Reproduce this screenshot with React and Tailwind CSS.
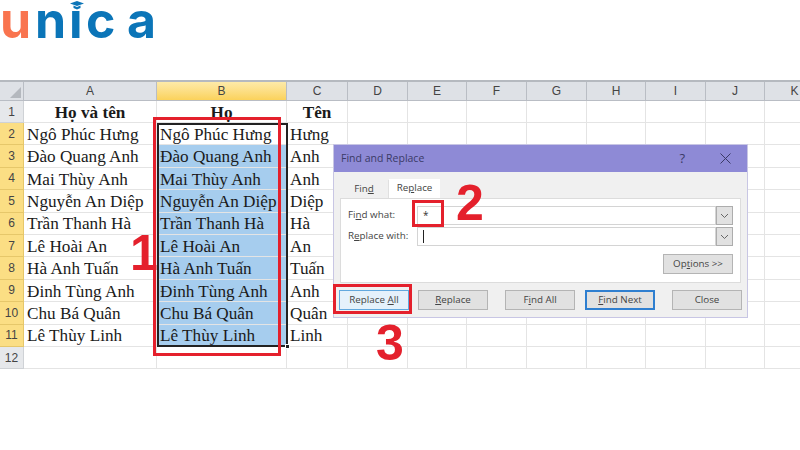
const people = [
  ["Ngô Phúc Hưng", "Ngô Phúc Hưng", "Hưng"],
  ["Đào Quang Anh", "Đào Quang Anh", "Anh"],
  ["Mai Thùy Anh", "Mai Thùy Anh", "Anh"],
  ["Nguyễn An Diệp", "Nguyễn An Diệp", "Diệp"],
  ["Trần Thanh Hà", "Trần Thanh Hà", "Hà"],
  ["Lê Hoài An", "Lê Hoài An", "An"],
  ["Hà Anh Tuấn", "Hà Anh Tuấn", "Tuấn"],
  ["Đinh Tùng Anh", "Đinh Tùng Anh", "Anh"],
  ["Chu Bá Quân", "Chu Bá Quân", "Quân"],
  ["Lê Thùy Linh", "Lê Thùy Linh", "Linh"],
];

const emptyCols = ["D", "E", "F", "G", "H", "I", "J", "K"];

function ColHead({ label, active }) {
  return (
    <div
      className={`flex items-center justify-center border-r border-b border-[#b9bdc4] text-[12px] text-[#444] font-['Liberation_Sans',sans-serif] ${
        active ? "bg-gradient-to-b from-[#fdeaa8] to-[#fbd25a]" : "bg-[#dee1e6]"
      }`}
    >
      {label}
    </div>
  );
}

function RowHead({ n, active }) {
  return (
    <div
      className={`flex items-center justify-center border-r border-b text-[12px] text-[#444] font-['Liberation_Sans',sans-serif] ${
        active ? "bg-[#fbde84] border-[#e6c76a]" : "bg-[#e6e8eb] border-[#cfd2d6]"
      }`}
    >
      {n}
    </div>
  );
}

function Cell({ children, className = "" }) {
  return (
    <div
      className={`flex items-center overflow-visible whitespace-nowrap border-r border-b border-[#e4e4e4] px-[3px] pt-[2px] text-[17.2px] text-[#1a1a1a] font-['Liberation_Serif',serif] ${className}`}
    >
      {children}
    </div>
  );
}

function Sheet() {
  return (
    <div className="grid grid-cols-[24px_133px_130px_61px_60px_59px_60px_60px_59px_60px_59px_60px] grid-rows-[19px_22px_repeat(11,22.4px)] border-t-2 border-[#b5b9bf] w-[825px]">
      <div className="relative bg-[#dee1e6] border-r border-b border-[#b9bdc4]">
        <div className="absolute right-[2px] bottom-[2px] w-0 h-0 border-l-[11px] border-l-transparent border-b-[11px] border-b-[#b4b8be]" />
      </div>
      <ColHead label="A" />
      <ColHead label="B" active />
      <ColHead label="C" />
      {emptyCols.map((c) => (
        <ColHead key={c} label={c} />
      ))}

      <RowHead n={1} />
      <Cell className="justify-center font-bold">Họ và tên</Cell>
      <Cell className="justify-center font-bold">Họ</Cell>
      <Cell className="justify-center font-bold">Tên</Cell>
      {emptyCols.map((c) => (
        <Cell key={c} />
      ))}

      {people.map((p, i) => (
        <div key={i} className="contents">
          <RowHead n={i + 2} active />
          <Cell>{p[0]}</Cell>
          <Cell className={i === 0 ? "" : "bg-[#a6cdee]"}>{p[1]}</Cell>
          <Cell>{p[2]}</Cell>
          {emptyCols.map((c) => (
            <Cell key={c} />
          ))}
        </div>
      ))}

      <RowHead n={12} />
      <Cell />
      <Cell />
      <Cell />
      {emptyCols.map((c) => (
        <Cell key={c} />
      ))}
    </div>
  );
}

const buttonStyles = {
  normal: "border border-[#b4b4b4] bg-[#e1e1e1]",
  hover: "border border-[#62a8de] bg-[#e5f1fb]",
  focused: "border-2 border-[#2f7fd0] bg-[#e1e1e1]",
};

function DlgButton({ children, variant = "normal" }) {
  return (
    <div
      className={`flex items-center justify-center h-[20px] w-[70px] text-[9.8px] text-[#444] ${buttonStyles[variant]}`}
    >
      {children}
    </div>
  );
}

function ComboRow({ label, value, caret }) {
  return (
    <div className="flex items-center h-[19px]">
      <div className="w-[69px] text-[9.8px] text-[#444] whitespace-nowrap">{label}</div>
      <div className="flex-1 flex items-center h-[19px] border border-[#d4d4d4] bg-white pl-[5px] text-[10px] text-[#333]">
        {value}
        {caret && <div className="w-px h-[13px] bg-[#222]" />}
      </div>
      <div className="flex items-center justify-center w-[17px] h-[19px] border border-[#adadad] bg-[#e1e1e1]">
        <svg width="9" height="6" viewBox="0 0 9 6" fill="none" stroke="#666" strokeWidth="1">
          <path d="M1 1l3.500 3.500L8 1" />
        </svg>
      </div>
    </div>
  );
}

function Dialog() {
  return (
    <div className="absolute left-[333px] top-[144px] w-[415px] h-[174px] bg-[#f0f0f0] border border-[#c8c6e4] flex flex-col font-['Open_Sans',sans-serif]">
      <div className="flex items-center justify-between h-[27px] shrink-0 bg-[#8e8ad6] pl-[7px] pr-[16px] text-[10.5px] text-[#3b3a66]">
        <span>Find and Replace</span>
        <div className="flex items-center gap-[35px]">
          <span className="text-[13px]">?</span>
          <svg width="11" height="11" viewBox="0 0 11 11" fill="none" stroke="#3b3a66" strokeWidth="1">
            <path d="M0.500 0.500l10 10M10.500 0.500l-10 10" />
          </svg>
        </div>
      </div>

      <div className="flex pl-[6px] pt-[7px] h-[26px] shrink-0 text-[9.8px] text-[#444]">
        <div className="flex items-center justify-center w-[49px] h-[18px] mt-[1px] border-r border-[#e0e0e0]">
          <span>
            Fin<span className="underline">d</span>
          </span>
        </div>
        <div className="flex items-center justify-center w-[51px] h-[19px] bg-white">
          <span>
            Re<span className="underline">p</span>lace
          </span>
        </div>
      </div>

      <div className="mx-[6px] w-[401px] h-[85px] shrink-0 bg-white border border-[#dcdcdc] pl-[7px] pr-[7px] pt-[7px] flex flex-col">
        <div className="flex flex-col gap-[2px]">
          <ComboRow
            label={
              <span>
                Fi<span className="underline">n</span>d what:
              </span>
            }
            value="*"
          />
          <ComboRow
            label={
              <span>
                R<span className="underline">e</span>place with:
              </span>
            }
            caret
          />
        </div>
        <div className="flex justify-end mt-[8px]">
          <DlgButton>
            <span>
              Op<span className="underline">t</span>ions &gt;&gt;
            </span>
          </DlgButton>
        </div>
      </div>

      <div className="flex items-center justify-between pl-[5px] pr-[5px] pt-[7px]">
        <div className="flex gap-[9px]">
          <DlgButton variant="hover">
            <span>
              Replace <span className="underline">A</span>ll
            </span>
          </DlgButton>
          <DlgButton>
            <span>
              <span className="underline">R</span>eplace
            </span>
          </DlgButton>
        </div>
        <div className="flex gap-[10px]">
          <DlgButton>
            <span>
              F<span className="underline">i</span>nd All
            </span>
          </DlgButton>
          <DlgButton variant="focused">
            <span>
              <span className="underline">F</span>ind Next
            </span>
          </DlgButton>
        </div>
        <DlgButton>Close</DlgButton>
      </div>
    </div>
  );
}

function Logo() {
  return (
    <div className="relative h-[80px] font-['Inter',sans-serif] font-bold text-[50px] leading-[40px] flex items-start">
      <span className="text-[#f9744f] w-[35px]">u</span>
      <span className="text-[#0b75b8] w-[34px]">n</span>
      <span className="text-[#0b75b8] w-[17px]">i</span>
      <span className="text-[#0b75b8] w-[41px]">c</span>
      <span className="text-[#0b75b8]">a</span>
      <svg className="absolute left-[67px] top-0" width="20" height="11" viewBox="0 0 20 11">
        <rect x="0" y="0" width="20" height="11" fill="#fff" />
        <path d="M3 3.500L10 1l7 2.500L10 6z" fill="#0b75b8" />
        <path d="M6.500 5.500v2.500l3.500 1.500 3.500-1.500v-2.500L10 7z" fill="#0b75b8" />
      </svg>
    </div>
  );
}

function App() {
  return (
    <div className="relative w-[800px] h-[450px] overflow-hidden bg-white">
      <Logo />
      <Sheet />

      {/* selection border + fill handle */}
      <div className="absolute left-[157px] top-[123px] w-[131px] h-[224px] border-2 border-[#222]" />
      <div className="absolute left-[285px] top-[344px] w-[5px] h-[5px] bg-[#222] border border-white" />

      <Dialog />

      {/* red annotation boxes */}
      <div className="absolute left-[153px] top-[117px] w-[128px] h-[239px] border-[3px] border-[#e4202c]" />
      <div className="absolute left-[412px] top-[200px] w-[32px] h-[27px] border-[3px] border-[#e4202c]" />
      <div className="absolute left-[333px] top-[284px] w-[79px] h-[30px] border-[3px] border-[#e4202c]" />

      <div className="absolute left-[130px] top-[224px] text-[#e4202c] text-[50px] leading-[58px] font-bold font-['Liberation_Sans',sans-serif]">1</div>
      <div className="absolute left-[456px] top-[174px] text-[#e4202c] text-[50px] leading-[58px] font-bold font-['Liberation_Sans',sans-serif]">2</div>
      <div className="absolute left-[376px] top-[314px] text-[#e4202c] text-[50px] leading-[58px] font-bold font-['Liberation_Sans',sans-serif]">3</div>
    </div>
  );
}

export default App;
